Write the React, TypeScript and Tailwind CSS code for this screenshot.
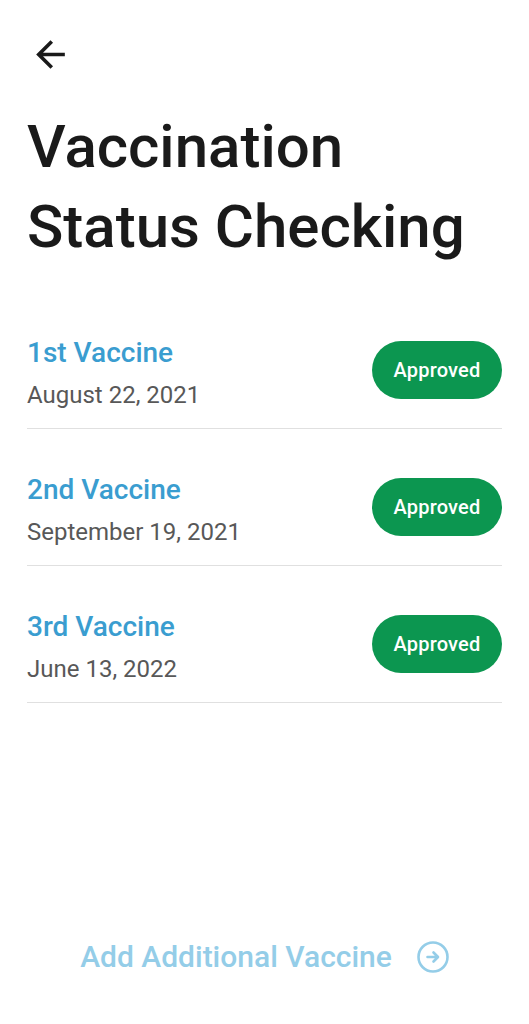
import React from "react";

const items = [
  { name: "1st Vaccine", date: "August 22, 2021" },
  { name: "2nd Vaccine", date: "September 19, 2021" },
  { name: "3rd Vaccine", date: "June 13, 2022" },
];

export default function App() {
  return (
    <div
      className="min-h-screen bg-white flex flex-col"
      style={{ fontFamily: "Roboto, 'Noto Sans', sans-serif" }}
    >
      <div className="px-[27px]">
        <div className="pt-[33px] pl-[4px]">
          <svg width="43" height="43" viewBox="0 0 24 24" className="-ml-[2px]">
            <path
              d="M20 11H7.83l5.59-5.59L12 4l-8 8 8 8 1.41-1.41L7.83 13H20v-2z"
              fill="#1a1a1a"
            />
          </svg>
        </div>
        <h1 className="mt-[31px] text-[60px] leading-[80px] font-medium text-[#1a1a1a]">
          Vaccination
          <br />
          Status Checking
        </h1>
        <div className="mt-[25px]">
          {items.map((it) => (
            <div
              key={it.name}
              className="flex items-start justify-between pt-[45px] pb-[19px] border-b border-[#e0e0e0]"
            >
              <div className="flex flex-col">
                <span className="text-[28px] leading-[32px] font-medium text-[#3a9dd0]">
                  {it.name}
                </span>
                <span className="mt-[12px] text-[24px] leading-[28px] text-[#585858]">
                  {it.date}
                </span>
              </div>
              <div className="mt-[4px] h-[58px] w-[130px] rounded-full bg-[#0c9650] flex items-center justify-center">
                <span className="text-white text-[20px] font-medium tracking-[0.2px]">Approved</span>
              </div>
            </div>
          ))}
        </div>
      </div>
      <div className="mt-auto pb-[49px] flex items-center justify-center gap-[25px]">
        <span className="text-[30px] leading-[36px] font-medium text-[#94cde8]">
          Add Additional Vaccine
        </span>
        <svg width="32" height="32" viewBox="0 0 32 32">
          <circle cx="16" cy="16" r="14.5" fill="none" stroke="#94cde8" strokeWidth="2.6" />
          <path
            d="M10.5 16h10M16.5 11.5l4.5 4.5-4.5 4.5"
            fill="none"
            stroke="#94cde8"
            strokeWidth="2.6"
            strokeLinecap="round"
            strokeLinejoin="round"
          />
        </svg>
      </div>
    </div>
  );
}
